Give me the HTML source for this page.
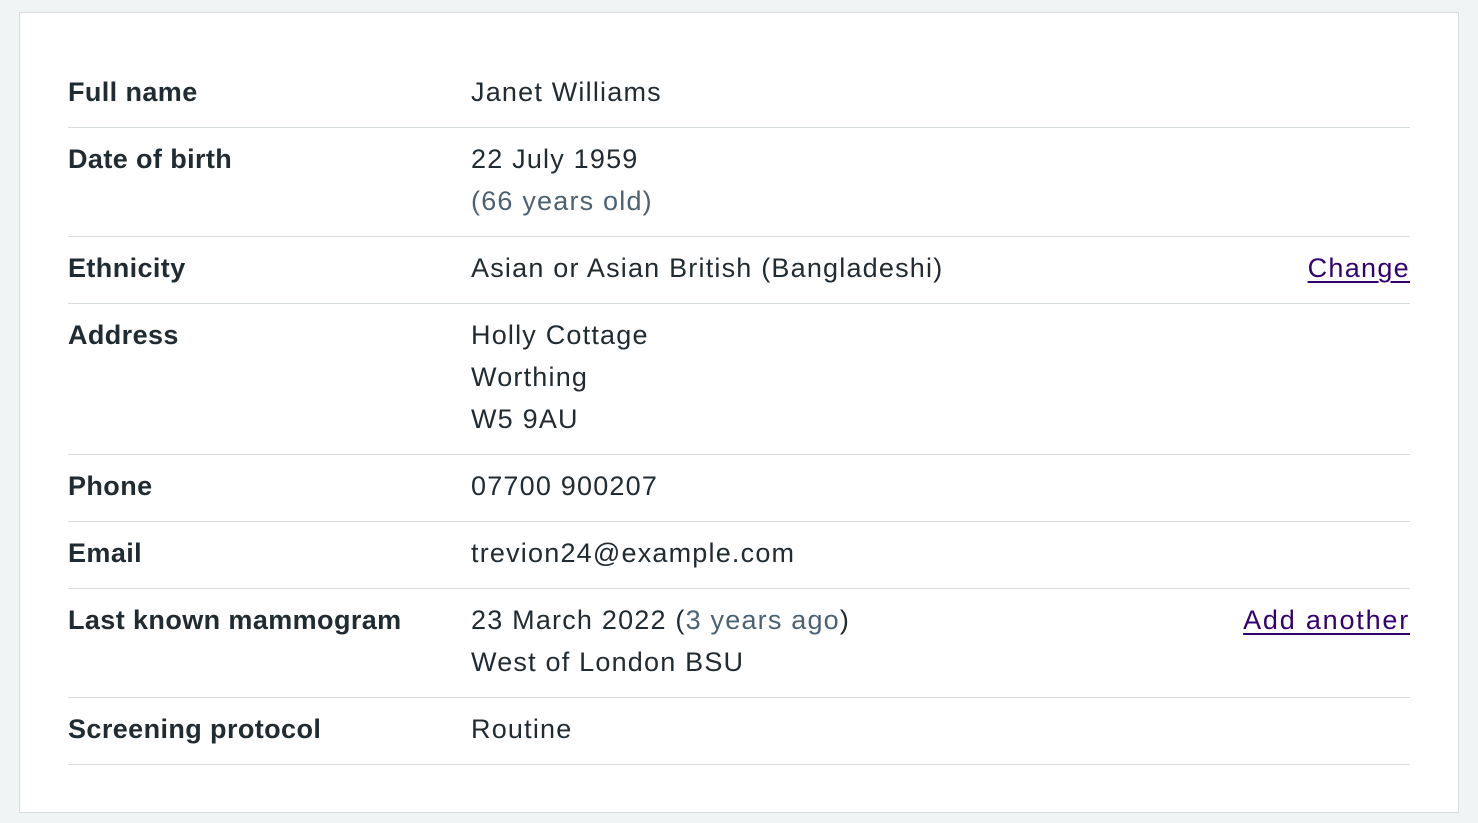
<!DOCTYPE html>
<html><head><meta charset="utf-8"><style>
html,body{margin:0;padding:0;background:#f0f4f5;width:1478px;height:823px;overflow:hidden}
body{font-family:"Liberation Sans",sans-serif;color:#212b32;font-size:27px;}
.card{position:absolute;left:19px;top:12px;width:1440px;height:801px;background:#fff;border:1px solid #d8dde0;box-sizing:border-box}
.row{position:absolute;left:48px;width:1342px;border-bottom:1px solid #d8dde0;box-sizing:border-box}
.k,.v,.a{position:absolute;line-height:42px}
.k{left:0;font-weight:bold;letter-spacing:0.4px}
.v{left:403px;letter-spacing:1.2px}
.a{right:0;letter-spacing:1.3px}
.a a{color:#330072;text-decoration:underline;text-decoration-thickness:2px;text-underline-offset:4px}
.s{color:#4c6272}
</style></head><body>
<div class="card">
<div class="row" style="top:48px;height:67px"><div class="k" style="top:10px">Full name</div><div class="v" style="top:10px">Janet Williams</div></div>
<div class="row" style="top:115px;height:109px"><div class="k" style="top:10px">Date of birth</div><div class="v" style="top:10px">22 July 1959<br><span class="s">(66 years old)</span></div></div>
<div class="row" style="top:224px;height:67px"><div class="k" style="top:10px">Ethnicity</div><div class="v" style="top:10px">Asian or Asian British (Bangladeshi)</div><div class="a" style="top:10px"><a>Change</a></div></div>
<div class="row" style="top:291px;height:151px"><div class="k" style="top:10px">Address</div><div class="v" style="top:10px">Holly Cottage<br>Worthing<br>W5 9AU</div></div>
<div class="row" style="top:442px;height:67px"><div class="k" style="top:10px">Phone</div><div class="v" style="top:10px">07700 900207</div></div>
<div class="row" style="top:509px;height:67px"><div class="k" style="top:10px">Email</div><div class="v" style="top:10px">trevion24@example.com</div></div>
<div class="row" style="top:576px;height:109px"><div class="k" style="top:10px">Last known mammogram</div><div class="v" style="top:10px">23 March 2022 (<span class="s">3 years ago</span>)<br>West of London BSU</div><div class="a" style="top:10px"><a style="letter-spacing:1.8px">Add another</a></div></div>
<div class="row" style="top:685px;height:67px"><div class="k" style="top:10px">Screening protocol</div><div class="v" style="top:10px">Routine</div></div>
</div>
</body></html>
